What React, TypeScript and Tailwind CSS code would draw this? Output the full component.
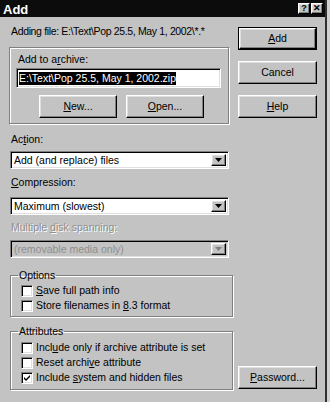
import React from "react";

const raised =
  "border border-t-white border-l-white border-r-black border-b-black shadow-[inset_-1px_-1px_0_#808080,inset_1px_1px_0_#dfdfdf] bg-[#c3c3c3]";
const sunken =
  "border border-t-[#808080] border-l-[#808080] border-r-white border-b-white shadow-[inset_1px_1px_0_#000,inset_-1px_-1px_0_#dfdfdf]";

function Btn({ children, w = "w-[79px]", def = false }: { children: React.ReactNode; w?: string; def?: boolean }) {
  if (def) {
    return (
      <div className={`${w} h-[23px] border border-black`}>
        <div className={`${raised} w-full h-full flex items-center justify-center`}>{children}</div>
      </div>
    );
  }
  return <div className={`${raised} ${w} h-[23px] flex items-center justify-center`}>{children}</div>;
}

function Arrow({ disabled = false }: { disabled?: boolean }) {
  return (
    <div className={`${raised} w-[15px] h-full flex items-center justify-center`}>
      <svg width="7" height="4" viewBox="0 0 7 4">
        <path d="M0 0h7L3.5 4z" fill={disabled ? "#808080" : "#000"} />
      </svg>
    </div>
  );
}

function Select({ value, disabled = false }: { value: string; disabled?: boolean }) {
  return (
    <div
      className={`${sunken} ml-[1px] w-[219px] h-[18px] flex items-stretch p-[2px] ${
        disabled ? "bg-[#c3c3c3] text-[#8f8f8f]" : "bg-white text-black"
      }`}
    >
      <div className="flex-1 pl-[1px] leading-[13px] whitespace-nowrap">{value}</div>
      <Arrow disabled={disabled} />
    </div>
  );
}

function Check({ label, checked = false }: { label: React.ReactNode; checked?: boolean }) {
  return (
    <div className="flex items-center h-[15px] pl-[10px]">
      <div className={`${sunken} bg-white w-[12px] h-[12px] flex items-center justify-center`}>
        {checked && (
          <svg width="8" height="8" viewBox="0 0 8 8">
            <path d="M1 3l2 2 4-4v2L3 7 1 5z" fill="#000" />
          </svg>
        )}
      </div>
      <span className="ml-[3px] leading-[13px] whitespace-nowrap">{label}</span>
    </div>
  );
}

function Group({ title, h, children }: { title: string; h: string; children: React.ReactNode }) {
  return (
    <fieldset
      className={`ml-[1px] w-[223px] ${h} border border-[#808080] shadow-[1px_1px_0_#fff,inset_1px_1px_0_#fff] px-0 pt-[1px]`}
    >
      <legend className="ml-[7px] px-[1px] leading-[13px]">{title}</legend>
      {children}
    </fieldset>
  );
}

export default function App() {
  return (
    <div
      className="w-[330px] h-[402px] bg-[#d0d0d0] text-[10.5px] text-black overflow-hidden"
      style={{ fontFamily: '"Liberation Sans", Arial, sans-serif' }}
    >
      <div className="w-[327px] h-[402px] bg-[#c3c3c3] border-r-2 border-r-[#303030]">
        {/* title bar */}
        <div className="h-[17px] bg-[#0c0c0c] flex items-center pl-[3px] pr-[2px]">
          <span className="text-white font-bold text-[13px] leading-[13px] mt-[1px]">Add</span>
          <div className="ml-auto flex">
            <div className={`${raised} w-[12px] h-[11px] flex items-center justify-center text-[9px] font-bold leading-none`}>?</div>
            <div className={`${raised} ml-[1px] w-[12px] h-[11px] flex items-center justify-center text-[9px] font-bold leading-none`}>✕</div>
          </div>
        </div>

        <div className="flex">
          {/* left column */}
          <div className="pl-[9px] w-[233px]">
            <div className="mt-[8px] pl-[2px] leading-[13px] whitespace-nowrap tracking-[-0.35px]">
              Adding file: E:\Text\Pop 25.5, May 1, 2002\*.*
            </div>

            <div className="mt-[9px] w-[220px] h-[77px] border border-[#808080] shadow-[1px_1px_0_#fff,inset_1px_1px_0_#fff] pt-[5px]">
              <div className="pl-[8px] leading-[13px]">
                Add to a<u>r</u>chive:
              </div>
              <div className={`${sunken} bg-white mt-[2px] ml-[6px] w-[205px] h-[20px] flex items-center pl-[2px]`}>
                <span className="bg-black text-white leading-[13px] whitespace-nowrap">E:\Text\Pop 25.5, May 1, 2002.zip</span>
              </div>
              <div className="mt-[7px] ml-[29px] flex gap-[9px]">
                <Btn w="w-[78px]">
                  <span>
                    <u>N</u>ew...
                  </span>
                </Btn>
                <Btn w="w-[78px]">
                  <span>
                    <u>O</u>pen...
                  </span>
                </Btn>
              </div>
            </div>

            <div className="mt-[9px] pl-[2px] leading-[13px]">
              Ac<u>t</u>ion:
            </div>
            <div className="mt-[5px]">
              <Select value="Add (and replace) files" />
            </div>
            <div className="mt-[7px] pl-[2px] leading-[13px]">
              <u>C</u>ompression:
            </div>
            <div className="mt-[8px]">
              <Select value="Maximum (slowest)" />
            </div>
            <div className="mt-[6px] pl-[2px] leading-[13px] text-[#8f8f8f] [text-shadow:1px_1px_0_#fff]">
              Multiple <u>d</u>isk spanning:
            </div>
            <div className="mt-[6px]">
              <Select value="(removable media only)" disabled />
            </div>

            <div className="mt-[11px]">
              <Group title="Options" h="h-[48px]">
                <Check
                  label={
                    <>
                      <u>S</u>ave full path info
                    </>
                  }
                />
                <Check
                  label={
                    <>
                      Store filenames in <u>8</u>.3 format
                    </>
                  }
                />
              </Group>
            </div>

            <div className="mt-[8px]">
              <Group title="Attributes" h="h-[65px]">
                <div className="pt-[1px]">
                  <Check
                    label={
                      <>
                        Incl<u>u</u>de only if archive attribute is set
                      </>
                    }
                  />
                  <Check
                    label={
                      <>
                        Reset archi<u>v</u>e attribute
                      </>
                    }
                  />
                  <Check
                    checked
                    label={
                      <>
                        Include <u>s</u>ystem and hidden files
                      </>
                    }
                  />
                </div>
              </Group>
            </div>
          </div>

          {/* right column */}
          <div className="ml-[5px] flex flex-col">
            <div className="mt-[10px] flex flex-col gap-[11px]">
              <Btn def>
                <span>
                  <u>A</u>dd
                </span>
              </Btn>
              <Btn>Cancel</Btn>
              <Btn>
                <span>
                  <u>H</u>elp
                </span>
              </Btn>
            </div>
            <div className="mt-[248px]">
              <Btn>
                <span>
                  <u>P</u>assword...
                </span>
              </Btn>
            </div>
          </div>
        </div>
      </div>
    </div>
  );
}
